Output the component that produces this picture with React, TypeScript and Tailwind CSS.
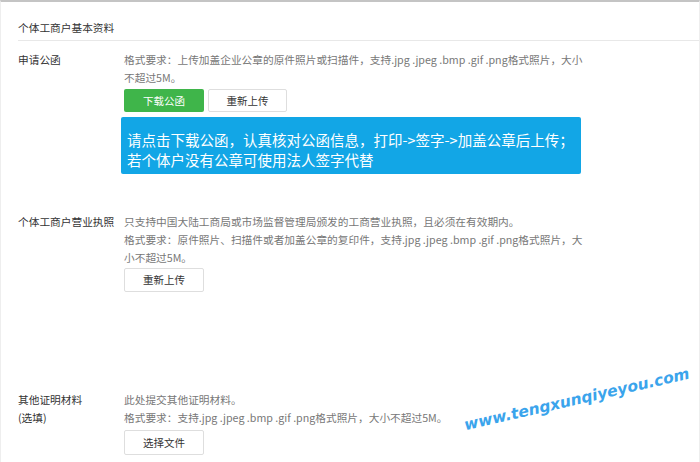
import React from "react";

const desc = "text-[10.7px] leading-[18px] text-[#777] whitespace-nowrap";
const label = "w-[123px] shrink-0 pl-[17px] text-[10.7px] leading-[18px] text-[#333]";

const App = () => {
  return (
    <div className="relative w-[700px] h-[462px] overflow-hidden bg-white font-['Noto_Sans_CJK_SC','Noto_Sans',sans-serif]">
      <div className="h-full border-t-2 border-t-[#c4c4c4] border-x border-x-[#eeeeee]">
        {/* Section title */}
        <div className="ml-[17px] pt-[17px] pb-[3px] border-b border-[#e8e8e8] text-[10.7px] leading-[18px] text-[#333]">
          个体工商户基本资料
        </div>

        {/* 申请公函 */}
        <div className="flex mt-[10px]">
          <div className={label}>申请公函</div>
          <div className="flex flex-col">
            <p className={desc}>
              格式要求：上传加盖企业公章的原件照片或扫描件，支持.jpg .jpeg .bmp .gif .png格式照片，大小
              <br />
              不超过5M。
            </p>
            <div className="flex gap-[4px] mt-[2px]">
              <button className="w-[80px] h-[23px] rounded-[2px] bg-[#3fb54a] text-white text-[10.5px]">
                下载公函
              </button>
              <button className="w-[79px] h-[23px] rounded-[2px] border border-[#dedede] bg-white text-[#333] text-[10.5px]">
                重新上传
              </button>
            </div>
            <div className="mt-[5px] -ml-[3px] w-[460px] h-[57px] rounded-[2px] bg-[#12a6e6] pl-[6px] pt-[13px] text-[14.5px] leading-[20px] text-white whitespace-nowrap">
              请点击下载公函，认真核对公函信息，打印-&gt;签字-&gt;加盖公章后上传；
              <br />
              若个体户没有公章可使用法人签字代替
            </div>
          </div>
        </div>

        {/* 营业执照 */}
        <div className="flex mt-[39px]">
          <div className={label}>个体工商户营业执照</div>
          <div className="flex flex-col">
            <p className={desc}>
              只支持中国大陆工商局或市场监督管理局颁发的工商营业执照，且必须在有效期内。
              <br />
              格式要求：原件照片、扫描件或者加盖公章的复印件，支持.jpg .jpeg .bmp .gif .png格式照片，大
              <br />
              小不超过5M。
            </p>
            <button className="mt-[1px] w-[80px] h-[24px] rounded-[2px] border border-[#dedede] bg-white text-[#333] text-[10.5px]">
              重新上传
            </button>
          </div>
        </div>

        {/* 其他证明材料 */}
        <div className="flex mt-[99px]">
          <div className={label}>
            其他证明材料
            <br />
            (选填)
          </div>
          <div className="flex flex-col">
            <p className={desc}>
              此处提交其他证明材料。
              <br />
              格式要求：支持.jpg .jpeg .bmp .gif .png格式照片，大小不超过5M。
            </p>
            <button className="mt-[3px] w-[80px] h-[25px] rounded-[2px] border border-[#dedede] bg-white text-[#333] text-[10.5px]">
              选择文件
            </button>
          </div>
        </div>
      </div>

      {/* watermark */}
      <div className="absolute left-[577px] top-[400px] -translate-x-1/2 -translate-y-1/2 -rotate-[13deg] whitespace-nowrap font-['DejaVu_Sans',sans-serif] text-[15.5px] font-bold italic text-[#3aa4ec]">
        www.tengxunqiyeyou.com
      </div>
    </div>
  );
};

export default App;
